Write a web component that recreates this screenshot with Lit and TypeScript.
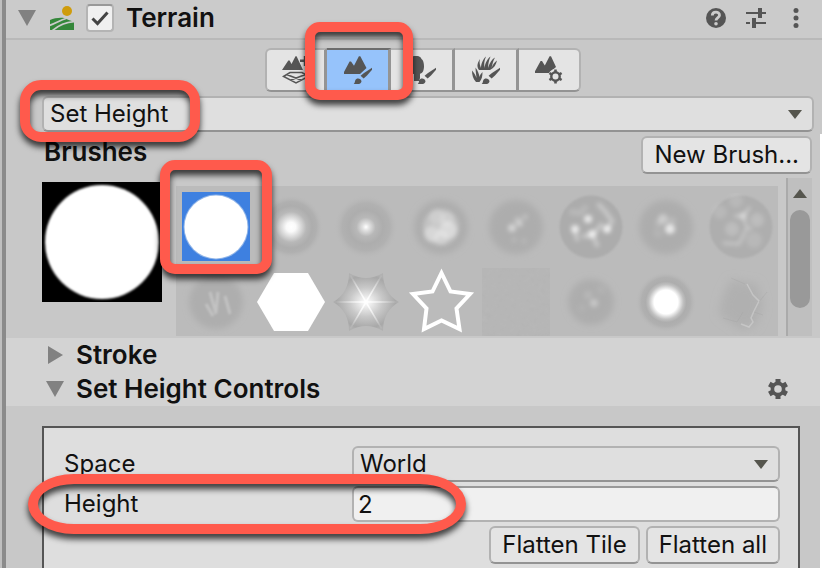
import { LitElement, html, svg, css } from "lit";
import { customElement, state } from "lit/decorators.js";
import { classMap } from "lit/directives/class-map.js";

const brushMark = svg`
  <path class="halo" d="M28 12 L17 21 L13 25"/>
  <path d="M28.5 11.5 L28.5 13.2 L23 19.6 L19.6 22.6 L16.6 19.8 L20 17 Z"/>
  <path d="M9.5 27.8 C11.5 27 10.3 24.4 12.4 22.9 C14.2 21.6 18 23 17.4 25.8 C16.6 28.6 12 28.6 9.5 27.8 Z"/>`;
const mountains = svg`<path d="M-1 18 L5.6 5.4 L7 5.4 L10 9.8 L14.9 .2 L16.3 .2 L22.5 12 L16 18 Z"/>`;

const tools = [
  {
    name: "Create Neighbor Terrains",
    icon: svg`<path d="M0 14 L6.3 4.4 L7.6 4.4 L9.5 8 L13.5 .2 L14.6 .2 L21 14 Z M18 3.5 H28 V6 H18 Z M21.8 0 H24.2 V10 H21.8 Z"/>
      <path d="M1.5 20.5 L8 16.5 H20 L26.5 20.5 L14 27 Z M4.5 18.5 L19 24 M23.5 18.5 L9 24" fill="none" stroke="currentColor" stroke-width="1.5"/>`,
  },
  { name: "Paint Terrain", icon: svg`${mountains}${brushMark}` },
  {
    name: "Paint Trees",
    icon: svg`<path d="M0 6 C0 -1 12 -2 13.5 3 C17 5 17 17 12.5 17.5 L12 18 V25 H6 V18 C-1 18 -2 10 0 6 Z"/>${brushMark}`,
  },
  {
    name: "Paint Details",
    icon: svg`<path d="M7 14 C4 10 6 6 8 3 C7 7 8 9 9 12 C9 8 11 3 14 .5 C12 5 12 8 12.5 12 C13 7 16 2 18.5 .5 C16.5 5 16.3 8 16 12 C17.5 7 20 3 23 1.5 C21 5 20.5 8 19.5 12 C21 8 23 6 25 4.5 C24 9 22 12 18 14 Z
      M4 26 C1 23 0 19 0 14.5 C2 17 3.5 19 4.5 22 C4 17 3.5 14 3.5 11.5 C6 15 7 18 7.5 21 C8 19 9 17.5 10.5 16 C10.5 20 10 23 7.5 26 Z"/>${brushMark}`,
  },
  {
    name: "Terrain Settings",
    icon: svg`<path d="M-1 17 L5.6 4.9 L7 4.9 L9.8 9.5 L14.6 .2 L16 .2 L21 11 L14 17 Z"/>
      <circle class="halo" cx="20.5" cy="20.5" r="5"/>
      <circle cx="20.5" cy="20.5" r="4.2" fill="none" stroke="currentColor" stroke-width="2.4"/>
      <path d="M20.5 13.5 V16 M20.5 25 V27.5 M14.4 17 L16.6 18.3 M24.4 22.7 L26.6 24 M14.4 24 L16.6 22.7 M24.4 18.3 L26.6 17" stroke="currentColor" stroke-width="2.6"/>`,
  },
];

const blobs = (r: number, points: number[][]) => svg`
  <circle cx="34" cy="34" r=${r} fill="#adadad" filter="url(#soft3)"/>
  <g fill="#ffffff" filter="url(#soft2)">
    ${points.map(([x, y, s, a]) => svg`<circle cx=${x} cy=${y} r=${s} opacity=${a}/>`)}
  </g>`;

const brushes = [
  { name: "Circle", art: svg`<circle cx="34" cy="34" r="32.5" fill="#8fb4e8"/><circle cx="34" cy="34" r="31.5" fill="#ffffff"/>` },
  { name: "Soft glow", art: svg`<circle cx="34" cy="34" r="34" fill="url(#glowMid)"/>` },
  { name: "Soft point", art: svg`<circle cx="34" cy="34" r="34" fill="url(#glowSmall)"/>` },
  { name: "Cloud", art: blobs(27, [[34, 34, 18, 0.25], [30, 24, 8, 0.2], [40, 26, 7, 0.2], [25, 41, 8, 0.35], [41, 37, 9, 0.4], [34, 45, 7, 0.25]]) },
  { name: "Cloud small", art: blobs(27, [[30, 35, 4, 0.45], [36, 28, 4, 0.25], [38, 31, 3, 0.3], [43, 24, 3, 0.2], [32, 47, 3, 0.1], [42, 48, 3, 0.1]]) },
  {
    name: "Craters",
    art: svg`<circle cx="34" cy="34" r="31.5" fill="#acacac" filter="url(#soft1)"/>
      <g filter="url(#soft2)" fill="none" stroke="#ffffff" stroke-linecap="round">
        <path d="M18 38 L20 46 M27 43 H35 L44 32 M50 37 L55 28 L48 18 L42 12 M36 43 L40 52" stroke-width="5" opacity=".3"/>
        <path d="M18 36 h.1 M31 26 h.1 M35 41 h.1 M50 36 h.1" stroke-width="8" opacity=".7"/>
        <path d="M15 19 L23 20 L28 15" stroke-width="6" opacity=".15"/>
      </g>`,
  },
  { name: "Sparks", art: blobs(27, [[38, 36, 5, 0.7], [31, 26, 5, 0.35], [27, 30, 4, 0.15], [40, 28, 4, 0.15], [26, 40, 5, 0.08]]) },
  {
    name: "Cells",
    art: svg`<circle cx="34" cy="34" r="31.5" fill="#aeaeae" filter="url(#soft1)"/>
      <g filter="url(#soft2)" fill="#ffffff">
        <circle cx="25" cy="36" r="7" opacity=".18"/><circle cx="50" cy="27" r="7" opacity=".18"/>
        <circle cx="13" cy="19" r="7" opacity=".12"/><circle cx="29" cy="8" r="7" opacity=".12"/>
        <circle cx="47" cy="47" r="8" opacity=".12"/>
        <path d="M27 23 L36 23 L43 14 M36 23 L40 35 L32 51 L16 50 M40 35 L45 36" fill="none" stroke="#ffffff" stroke-width="3" opacity=".3"/>
        <circle cx="36" cy="23" r="4" opacity=".3"/>
      </g>`,
  },
  {
    name: "Rock",
    art: svg`<circle cx="34" cy="34" r="27" fill="#aeaeae" filter="url(#soft3)"/>
      <path d="M28 24 L34 46 M36 24 L34 44 M43 28 L48 46 M24 36 L31 48" fill="none" stroke="#ffffff" stroke-width="3" opacity=".25" filter="url(#soft1)"/>`,
  },
  { name: "Hexagon", art: svg`<path d="M17 5 H51 L68 34 L51 63 H17 L0 34 Z" fill="#ffffff"/>` },
  {
    name: "Star glow",
    art: svg`<path d="M17 5 Q34 15 51 5 Q51 25 67 34 Q51 43 51 63 Q34 53 17 63 Q17 43 1 34 Q17 25 17 5 Z" fill="url(#glowStar)"/>
      <path d="M17 5 L51 63 M51 5 L17 63 M1 34 H67" stroke="url(#ray)" stroke-width="1.5"/>`,
  },
  { name: "Star", art: svg`<path d="M34.5 5 L43.5 23.5 L63 26 L49.5 40.5 L52.5 61 L34.5 52.5 L17 61 L19.5 40.5 L6 26 L25.5 23.5 Z" fill="none" stroke="#ffffff" stroke-width="4"/>` },
  { name: "Noise", art: svg`<rect width="68" height="68" fill="#b6b6b6"/><rect width="68" height="68" filter="url(#grain)" opacity=".05"/>` },
  { name: "Dust", art: blobs(23, [[37, 35, 4, 0.3], [31, 27, 4, 0.12], [44, 22, 4, 0.06], [25, 40, 4, 0.05]]) },
  { name: "Ball", art: svg`<circle cx="34" cy="34" r="34" fill="url(#glowBig)"/>` },
  {
    name: "Crack",
    art: svg`<path d="M24 12 L50 16 L56 38 L48 58 L34 62 L12 46 L16 28 Z" fill="#b0b0b0" filter="url(#soft4)"/>
      <path d="M40 16 L46 27 L52 33 L47 43 L44 50 L46 54 L42 59 L34 56" fill="none" stroke="#ffffff" stroke-width="1.5" opacity=".25"/>
      <path d="M24 10 L38 16 M52 34 L60 24 M47 44 L56 47 M16 50 L30 54 L36 44" fill="none" stroke="#a2a2a2" stroke-width="1" opacity=".35"/>`,
  },
];

@customElement("app-root")
export class AppRoot extends LitElement {
  @state() private tool = 1;
  @state() private brush = 0;

  static styles = css`
    :host {
      display: flex;
      flex-direction: column;
      min-height: 100vh;
      box-sizing: border-box;
      border-left: 2px solid #bfbfbf;
      background: #ffffff;
      color: #111111;
      font: 24px/32px Inter, sans-serif;
    }
    * { box-sizing: border-box; }
    h2, h3 { margin: 0; font-size: 26px; font-weight: 600; font-optical-sizing: none; }
    button, select, input { margin: 0; font: inherit; color: inherit; }
    button { cursor: pointer; }
    svg { display: block; flex: none; fill: currentColor; }
    .defs { position: absolute; width: 0; height: 0; }

    .top, .lower { border-left: 4px solid #8b8b8b; background: #c8c8c8; }
    .top { margin-right: 2px; }
    .lower { margin-right: 4px; flex: 1; display: flex; flex-direction: column; }

    .header {
      display: flex;
      align-items: center;
      height: 40px;
      padding: 0 16px 2px 12px;
      border-bottom: 2px solid #b9b9b9;
      background: #cbcbcb;
      color: #555555;
    }
    .plain { padding: 0; border: 0; background: none; color: #555555; }
    .fold { color: #818181; }
    .logo { margin: 0 12px 0 14px; }
    .check { position: relative; display: flex; margin-right: 12px; }
    .check input {
      appearance: none;
      width: 28px;
      height: 28px;
      border: 2px solid #b4b4b4;
      border-top-color: #999999;
      border-radius: 4px;
      background: #f0f0f0;
    }
    .check svg { position: absolute; inset: 0; pointer-events: none; color: #444444; }
    .title { flex: 1; color: #111111; }
    .actions { display: flex; align-items: center; gap: 20px; }

    .tools { display: flex; justify-content: center; padding: 8px 0 4px 18px; }
    .tool {
      position: relative;
      display: flex;
      align-items: center;
      justify-content: center;
      width: 64px;
      height: 44px;
      padding: 0;
      border: 2px solid #b2b2b2;
      border-width: 2px 3px 2px 0;
      border-right-color: #949494;
      border-bottom-color: #939393;
      background: #e4e4e4;
      color: #555555;
    }
    .tool:first-child { width: 62px; border-left-width: 2px; border-radius: 6px 0 0 6px; }
    .tool:last-child { width: 62px; border-right: 2px solid #b2b2b2; border-radius: 0 6px 6px 0; }
    .tool.on { background: #96c3fb; border-top-color: #6c6c6c; }
    .halo { fill: #e4e4e4; stroke: #e4e4e4; stroke-width: 5; }
    .tool.on .halo { fill: #96c3fb; stroke: #96c3fb; }

    .mode { position: relative; margin: 0 8px 2px 36px; }
    .drop { position: relative; }
    .drop select {
      display: block;
      appearance: none;
      width: 100%;
      height: 36px;
      padding: 0 40px 0 6px;
      border: 2px solid #b2b2b2;
      border-bottom-color: #939393;
      border-radius: 6px;
      background: #dfdfdf;
    }
    .drop svg { position: absolute; right: 12px; top: 14px; color: #55554d; pointer-events: none; }

    .heading {
      display: flex;
      justify-content: space-between;
      align-items: flex-start;
      padding: 2px 8px 4px 38px;
    }
    .btn {
      height: 38px;
      padding: 0 11px;
      border: 2px solid #b2b2b2;
      border-bottom-color: #939393;
      border-radius: 6px;
      background: #e4e4e4;
      white-space: nowrap;
    }
    .brushes { display: flex; padding: 0 8px 2px 36px; }
    .preview { margin: 4px 14px 0 0; }
    .grid {
      flex: 1;
      display: grid;
      grid-template-columns: repeat(8, 1fr);
      grid-auto-rows: 69px;
      row-gap: 6px;
      margin: 8px 8px 0 0;
      padding: 6px 0 0 2px;
      background: #bbbbbb;
    }
    .brush {
      position: relative;
      justify-self: center;
      display: flex;
      align-items: center;
      width: 68px;
      padding: 0;
      border: 0;
      background: none;
    }
    .brush.on { background: #3e80e0; }
    .scroll {
      display: flex;
      flex-direction: column;
      align-items: center;
      gap: 12px;
      width: 26px;
      padding-top: 11px;
      border-left: 2px solid #aaaaaa;
      background: #bfbfbf;
      color: #55554d;
    }
    .thumb { width: 20px; height: 98px; border-radius: 10px; background: #999999; }

    .folds { padding-left: 40px; background: #d3d3d3; }
    .foldrow { display: flex; align-items: center; height: 34px; padding-right: 32px; }
    .foldrow h3 { flex: 1; margin-left: 12px; }

    .panel {
      flex: 1;
      margin: 20px 20px 0 36px;
      padding: 18px 18px 4px 20px;
      border: 2px solid #555555;
      border-bottom: 0;
      background: #dedede;
    }
    .field {
      position: relative;
      display: grid;
      grid-template-columns: 288px 1fr;
      align-items: center;
      margin-bottom: 4px;
    }
    .field input {
      width: 100%;
      height: 36px;
      padding: 0 4px;
      border: 2px solid #b2b2b2;
      border-top-color: #999999;
      border-radius: 6px;
      background: #f0f0f0;
    }
    .buttons { display: flex; justify-content: flex-end; gap: 6px; }

    .mark {
      position: absolute;
      z-index: 2;
      border: 10px solid #ff5a4c;
      border-radius: 15px;
      filter: drop-shadow(0 5px 3px rgba(0, 0, 0, 0.75));
      pointer-events: none;
    }
    .mark-tool { inset: -28px -25px -10px -22px; }
    .mark-mode { left: -22px; top: -16px; width: 180px; height: 62px; border-radius: 21px; }
    .mark-brush { inset: -32px -22px -13px -22px; }
    .mark-height { left: -36px; top: -12px; width: 438px; height: 60px; border-radius: 46px / 30px; }
  `;

  private down = html`<svg class="arrow" width="14" height="9" aria-hidden="true"><path d="M0 0 H14 L7 9 Z" /></svg>`;
  private openFold = html`<svg class="fold" width="18" height="16" aria-hidden="true"><path d="M0 0 H18 L9 16 Z" /></svg>`;
  private closedFold = html`<svg class="fold" width="18" height="18" aria-hidden="true"><path d="M2 0 V18 L17 9 Z" /></svg>`;

  private defs() {
    const stops = (list: [number, string, number][]) =>
      list.map(([o, c, a]) => svg`<stop offset=${o} stop-color=${c} stop-opacity=${a}/>`);
    return html`<svg class="defs" aria-hidden="true"><defs>
      <radialGradient id="glowMid">${stops([[0, "#ffffff", 1], [0.14, "#fafafa", 1], [0.45, "#b8b8b8", 1], [0.62, "#adadad", 1], [0.75, "#b0b0b0", 1], [0.95, "#bbbbbb", 0]])}</radialGradient>
      <radialGradient id="glowSmall">${stops([[0, "#ffffff", 1], [0.1, "#e2e2e2", 1], [0.28, "#b8b8b8", 1], [0.5, "#adadad", 1], [0.7, "#b1b1b1", 1], [0.95, "#bbbbbb", 0]])}</radialGradient>
      <radialGradient id="glowBig">${stops([[0, "#ffffff", 1], [0.35, "#ffffff", 1], [0.51, "#c0c0c0", 1], [0.6, "#adadad", 1], [0.72, "#b0b0b0", 1], [0.9, "#bbbbbb", 0]])}</radialGradient>
      <radialGradient id="glowStar">${stops([[0, "#ffffff", 1], [0.5, "#c8c8c8", 1], [0.9, "#a8a8a8", 1], [1, "#b0b0b0", 1]])}</radialGradient>
      <radialGradient id="ray" gradientUnits="userSpaceOnUse" cx="34" cy="34" r="32">${stops([[0, "#ffffff", 1], [1, "#ffffff", 0]])}</radialGradient>
      <filter id="soft1" x="-20%" y="-20%" width="140%" height="140%"><feGaussianBlur stdDeviation="1"/></filter>
      <filter id="soft2" x="-30%" y="-30%" width="160%" height="160%"><feGaussianBlur stdDeviation="2"/></filter>
      <filter id="soft3" x="-30%" y="-30%" width="160%" height="160%"><feGaussianBlur stdDeviation="3"/></filter>
      <filter id="soft4" x="-30%" y="-30%" width="160%" height="160%"><feGaussianBlur stdDeviation="5"/></filter>
      <filter id="grain" x="0" y="0" width="100%" height="100%"><feTurbulence type="fractalNoise" baseFrequency="0.2" numOctaves="2"/><feColorMatrix type="saturate" values="0"/></filter>
    </defs></svg>`;
  }

  render() {
    return html`
      ${this.defs()}
      <section class="top">
        <header class="header">
          <button class="plain" aria-label="Collapse Terrain">${this.openFold}</button>
          <svg class="logo" width="24" height="24" viewBox="0 0 24 24" aria-hidden="true">
            <circle cx="17" cy="5" r="5" fill="#cf9c0c" />
            <path d="M0 14 C4 12 10 11.5 14 12 C18 14 21 15 24 15.5 V24 H0 Z" fill="#34873a" />
            <path d="M-1 19.5 C5 18 10 14 16 12.5 M2 25 C8 19.5 14 16 25 15.5" fill="none" stroke="#cbcbcb" stroke-width="1.8" />
          </svg>
          <span class="check">
            <input type="checkbox" checked aria-label="Enable Terrain" />
            <svg width="28" height="28" viewBox="0 0 28 28" aria-hidden="true"><path d="M6.5 14.5 L11.5 19.5 L21.5 8.5" fill="none" stroke="currentColor" stroke-width="3" /></svg>
          </span>
          <h2 class="title">Terrain</h2>
          <div class="actions">
            <button class="plain" aria-label="Help">
              <svg width="20" height="20" viewBox="0 0 20 20"><circle cx="10" cy="10" r="10" /><path d="M6.3 7.6 C6.3 3 13.5 3 13.5 7.2 C13.5 9.6 10 9.6 10 12.6" fill="none" stroke="#cbcbcb" stroke-width="2.8" /><circle cx="10" cy="15.8" r="1.8" fill="#cbcbcb" /></svg>
            </button>
            <button class="plain" aria-label="Presets">
              <svg width="20" height="20" viewBox="0 0 20 20"><path d="M0 4 H12 V0 H16 V4 H20 V6 H16 V10 H12 V6 H0 Z M0 14 H4 V16 H0 Z M6 10 H10 V14 H20 V16 H10 V20 H6 Z" /></svg>
            </button>
            <button class="plain" aria-label="More">
              <svg width="20" height="20" viewBox="0 0 20 20"><circle cx="10" cy="2.5" r="2.5" /><circle cx="10" cy="10" r="2.5" /><circle cx="10" cy="17.5" r="2.5" /></svg>
            </button>
          </div>
        </header>
        <nav class="tools" aria-label="Terrain tools">
          ${tools.map((t, i) => html`
            <button class=${classMap({ tool: true, on: i === this.tool })} aria-label=${t.name} @click=${() => (this.tool = i)}>
              <svg width="28" height="28" viewBox="0 0 28 28">${t.icon}</svg>
              ${i === this.tool ? html`<span class="mark mark-tool"></span>` : ""}
            </button>`)}
        </nav>
        <div class="mode">
          <div class="drop">
            <select aria-label="Paint mode"><option>Set Height</option></select>${this.down}
          </div>
          <span class="mark mark-mode"></span>
        </div>
      </section>
      <section class="lower">
        <div class="heading">
          <h3>Brushes</h3>
          <button class="btn">New Brush...</button>
        </div>
        <div class="brushes">
          <svg class="preview" width="120" height="120" viewBox="0 0 120 120" role="img" aria-label="Brush preview">
            <rect width="120" height="120" fill="#000000" />
            <circle cx="60" cy="60" r="57" fill="#ffffff" filter="url(#soft1)" />
          </svg>
          <div class="grid">
            ${brushes.map((b, i) => html`
              <button class=${classMap({ brush: true, on: i === this.brush })} aria-label=${b.name} @click=${() => (this.brush = i)}>
                <svg width="68" height="68" viewBox="0 0 68 68">${b.art}</svg>
                ${i === this.brush ? html`<span class="mark mark-brush"></span>` : ""}
              </button>`)}
          </div>
          <div class="scroll">
            <svg width="14" height="9" aria-hidden="true"><path d="M0 9 H14 L7 0 Z" /></svg>
            <div class="thumb"></div>
          </div>
        </div>
        <div class="folds">
          <div class="foldrow">
            <button class="plain" aria-label="Expand Stroke">${this.closedFold}</button>
            <h3>Stroke</h3>
          </div>
          <div class="foldrow">
            <button class="plain" aria-label="Collapse Set Height Controls">${this.openFold}</button>
            <h3>Set Height Controls</h3>
            <button class="plain" aria-label="Settings">
              <svg width="20" height="20" viewBox="0 0 20 20">
                <circle cx="10" cy="10" r="5.6" fill="none" stroke="currentColor" stroke-width="3.6" />
                <path d="M10 0 V4 M10 16 V20 M1.3 5 L4.8 7 M15.2 13 L18.7 15 M1.3 15 L4.8 13 M15.2 7 L18.7 5" stroke="currentColor" stroke-width="5" />
              </svg>
            </button>
          </div>
        </div>
        <div class="panel">
          <div class="field">
            <label for="space">Space</label>
            <div class="drop"><select id="space"><option>World</option></select>${this.down}</div>
          </div>
          <div class="field">
            <label for="height">Height</label>
            <input id="height" type="text" value="2" />
            <span class="mark mark-height"></span>
          </div>
          <div class="buttons">
            <button class="btn">Flatten Tile</button>
            <button class="btn">Flatten all</button>
          </div>
        </div>
      </section>
    `;
  }
}
